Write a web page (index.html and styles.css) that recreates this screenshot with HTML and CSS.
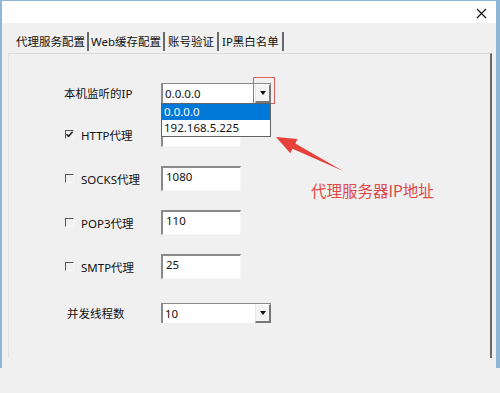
FILE: index.html
```html
<!DOCTYPE html>
<html lang="zh-CN">
<head>
<meta charset="utf-8">
<title>代理服务配置</title>
<link rel="stylesheet" href="styles.css">
</head>
<body>
<div class="window">
  <div class="titlebar">
    <svg class="close" width="11" height="11" viewBox="0 0 11 11"><path d="M1 1L10 10M10 1L1 10" stroke="#111" stroke-width="1.1" fill="none"/></svg>
  </div>
  <div class="tabs">
    <div class="tab tab1">代理服务配置</div>
    <div class="tab tab2">Web缓存配置</div>
    <div class="tab tab3">账号验证</div>
    <div class="tab tab4">IP黑白名单</div>
  </div>
  <div class="panel">
    <div class="row row-ip">
      <div class="label">本机监听的IP</div>
      <div class="combo">
        <span class="combo-text">0.0.0.0</span>
        <span class="combo-btn"><span class="tri"></span></span>
        <div class="red-box"></div>
        <div class="droplist">
          <div class="opt selected">0.0.0.0</div>
          <div class="opt">192.168.5.225</div>
        </div>
      </div>
    </div>
    <div class="row">
      <div class="label check-label"><span class="cb checked"><svg width="9" height="9" viewBox="0 0 9 9"><path d="M1.5 4.2L3.5 6.4L7.6 1.8" stroke="#222" stroke-width="1.6" fill="none"/></svg></span>HTTP代理</div>
      <div class="input"></div>
    </div>
    <div class="row">
      <div class="label check-label"><span class="cb"></span>SOCKS代理</div>
      <div class="input">1080</div>
    </div>
    <div class="row">
      <div class="label check-label"><span class="cb"></span>POP3代理</div>
      <div class="input">110</div>
    </div>
    <div class="row">
      <div class="label check-label"><span class="cb"></span>SMTP代理</div>
      <div class="input">25</div>
    </div>
    <div class="row row-threads">
      <div class="label label-threads">并发线程数</div>
      <div class="combo">
        <span class="combo-text">10</span>
        <span class="combo-btn"><span class="tri"></span></span>
      </div>
    </div>
  </div>
</div>
<svg class="annot-arrow" width="500" height="393" viewBox="0 0 500 393">
  <polygon points="276,137 297.5,139 295.3,143.4 343,171 292.5,148.8 290.3,153.2" fill="#e8413c"/>
</svg>
<div class="annot-text">代理服务器IP地址</div>
</body>
</html>
```
FILE: styles.css
```css
html, body {
  margin: 0;
  padding: 0;
}
body {
  width: 500px;
  height: 393px;
  background: #f0f0f0;
  font-family: "Noto Sans", "Noto Sans CJK SC", sans-serif;
  font-size: 11.5px;
  color: #111;
  position: relative;
  overflow: hidden;
}
.window {
  height: 368px;
  border-top: 1px solid #8db6d8;
  border-left: 2px solid #8db6d8;
  border-right: 4px solid #8db6d8;
  background: #f0f0f0;
  box-sizing: border-box;
}
.titlebar {
  height: 22px;
  background: #ffffff;
  display: flex;
  justify-content: flex-end;
  align-items: center;
  padding-right: 9px;
}
.close {
  display: block;
  margin-top: 2px;
}
.tabs {
  display: flex;
  margin: 9px 0 0 6px;
  height: 21px;
}
.tab {
  height: 19px;
  line-height: 19px;
  border-right: 2px solid #6a6a6a;
  box-sizing: content-box;
  white-space: nowrap;
  font-size: 11.5px;
}
.tab1 { width: 71px; padding-left: 8px; }
.tab2 { width: 72px; padding-left: 2px; }
.tab3 { width: 49px; padding-left: 3px; }
.tab4 { width: 60px; padding-left: 3px; }
.panel {
  margin-left: 6px;
  width: 484px;
  height: 305px;
  box-sizing: border-box;
  border-top: 1px solid #dcdcdc;
  border-left: 1px solid #e4e4e4;
  border-right: 2px solid #6a6a6a;
  padding: 29px 0 0 55px;
  display: flex;
  flex-direction: column;
  gap: 19px;
}
.row {
  display: flex;
  align-items: center;
  height: 25px;
}
.row-ip, .row-threads {
  height: 20px;
}
.row-threads { margin-top: 5px; }
.label {
  width: 97px;
  display: flex;
  align-items: center;
  white-space: nowrap;
}
.check-label {
  padding-left: 1px;
  width: 96px;
}
.label-threads {
  padding-left: 3px;
  width: 94px;
}
.cb {
  width: 9px;
  height: 9px;
  box-sizing: border-box;
  border-top: 1px solid #555;
  border-left: 1px solid #555;
  border-right: 1px solid #f8f8f8;
  border-bottom: 1px solid #f8f8f8;
  margin-right: 7px;
  position: relative;
  display: inline-block;
}
.cb svg {
  position: absolute;
  left: -1px;
  top: -1px;
}
.input {
  width: 80px;
  height: 25px;
  box-sizing: border-box;
  background: #fff;
  border-top: 2px solid #8a8a8a;
  border-left: 2px solid #8a8a8a;
  border-right: 1px solid #f4f4f4;
  border-bottom: 1px solid #f4f4f4;
  padding: 1px 0 0 3px;
  line-height: 15px;
}
.combo {
  position: relative;
  width: 110px;
  height: 20px;
  box-sizing: border-box;
  background: #fff;
  border-top: 1px solid #8a8a8a;
  border-left: 2px solid #8a8a8a;
  display: flex;
  align-items: center;
}
.combo-text {
  flex: 1;
  padding-left: 2px;
}
.combo-btn {
  width: 16px;
  height: 19px;
  box-sizing: border-box;
  background: #f4f4f4;
  border-top: 1px solid #fff;
  border-left: 1px solid #e8e8e8;
  border-right: 2px solid #777;
  border-bottom: 2px solid #777;
  display: flex;
  align-items: center;
  justify-content: center;
}
.tri {
  width: 0;
  height: 0;
  border-left: 3.5px solid transparent;
  border-right: 3.5px solid transparent;
  border-top: 4px solid #111;
}
.red-box {
  position: absolute;
  left: 90px;
  top: -7px;
  width: 20px;
  height: 25px;
  border: 1px solid #dc5f5f;
}
.droplist {
  position: absolute;
  left: -2px;
  top: 19px;
  width: 110px;
  box-sizing: border-box;
  border: 1px solid #646464;
  background: #fff;
  z-index: 2;
}
.opt {
  height: 16px;
  line-height: 16px;
  padding-left: 2px;
}
.opt.selected {
  background: #0078d7;
  color: #fff;
}
.annot-arrow {
  position: absolute;
  left: 0;
  top: 0;
  pointer-events: none;
}
.annot-text {
  position: absolute;
  left: 311px;
  top: 179px;
  font-family: "Noto Sans CJK SC", sans-serif;
  font-size: 15.5px;
  color: #e04848;
  white-space: nowrap;
}
```
